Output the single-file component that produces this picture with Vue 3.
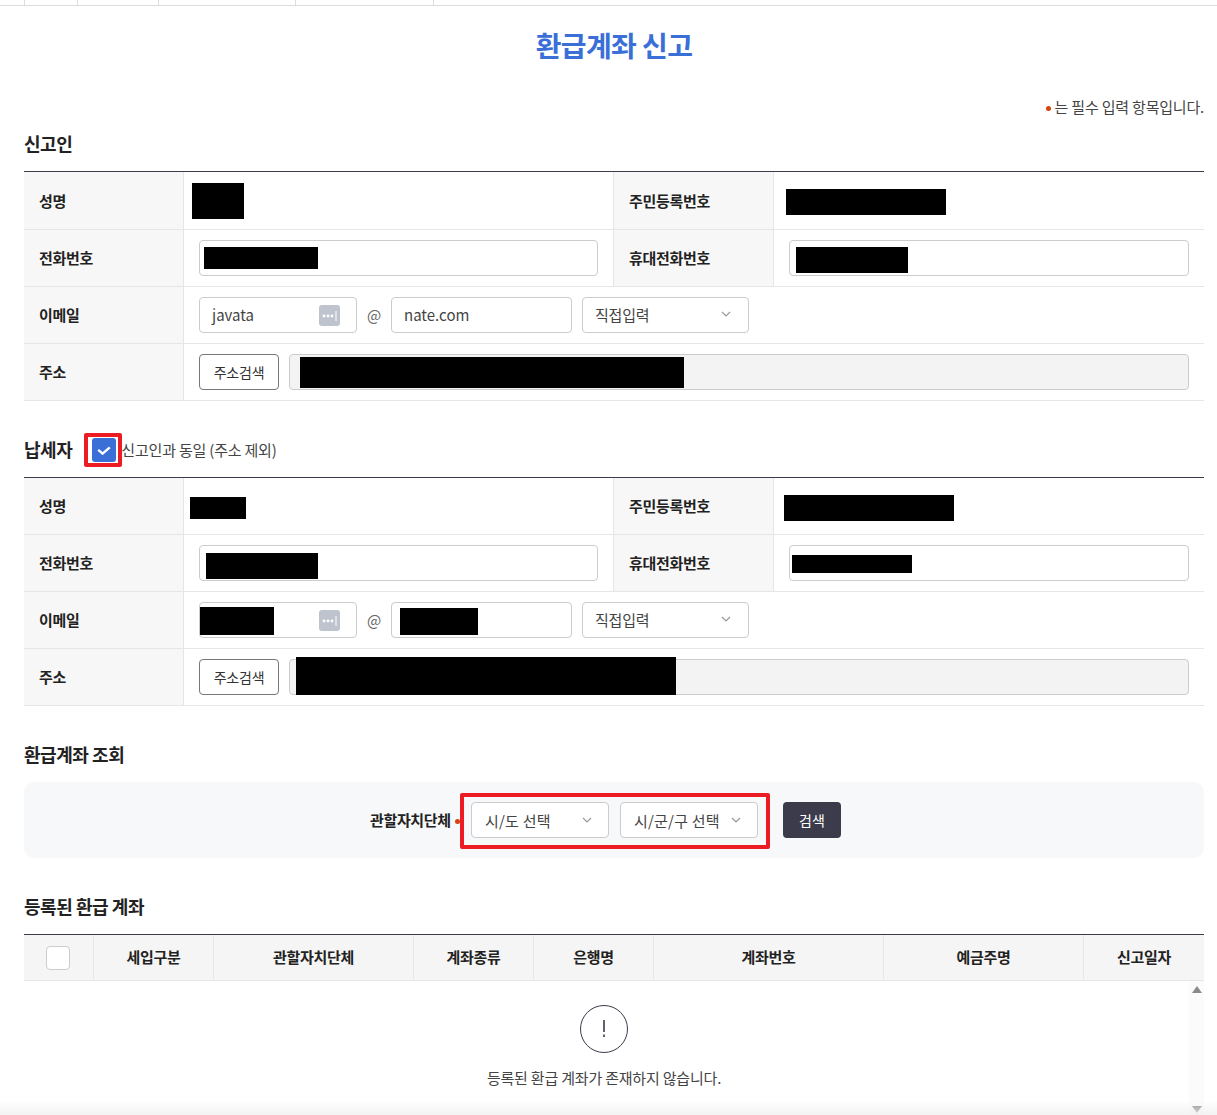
<script setup>
const tabs = [53, 81, 137, 139]

const applicants = [
  {
    title: '신고인',
    tall: true,
    emailId: 'javata',
    emailDomain: 'nate.com',
    cover: {
      name: { left: 8, top: 11, width: 52, height: 36 },
      rrn: { left: 12, top: 17, width: 160, height: 26 },
      tel: { left: 4, top: 6, width: 114, height: 22 },
      mobile: { left: 6, top: 6, width: 112, height: 26 },
      address: { left: 10, top: 2, width: 384, height: 31 }
    }
  },
  {
    title: '납세자',
    tall: false,
    emailId: '',
    emailDomain: '',
    cover: {
      name: { left: 6, top: 19, width: 56, height: 22 },
      rrn: { left: 10, top: 17, width: 170, height: 26 },
      tel: { left: 6, top: 7, width: 112, height: 26 },
      mobile: { left: 2, top: 9, width: 120, height: 18 },
      emailId: { left: 0, top: 4, width: 74, height: 28 },
      emailDomain: { left: 8, top: 5, width: 78, height: 27 },
      address: { left: 6, top: -3, width: 380, height: 38 }
    }
  }
]

const columns = ['세입구분', '관할자치단체', '계좌종류', '은행명', '계좌번호', '예금주명', '신고일자']
const coverStyle = (box) => ({
  left: box.left + 'px',
  top: box.top + 'px',
  width: box.width + 'px',
  height: box.height + 'px'
})
</script>

<template>
  <div class="page">
    <nav class="tabs">
      <span v-for="width in tabs" :key="width" class="tab" :style="{ width: width + 'px' }"></span>
    </nav>

    <main class="content">
      <h1 class="title">환급계좌 신고</h1>
      <p class="note"><i class="dot"></i>는 필수 입력 항목입니다.</p>

      <section v-for="(person, index) in applicants" :key="person.title" class="section">
        <div class="section-head">
          <h2 class="section-title">{{ person.title }}</h2>
          <label v-if="index === 1" class="same">
            <span class="check-mark">
              <svg width="14" height="10" viewBox="0 0 14 10"><path d="M1.2 4.8 5.6 8.6 12.8 2.4" fill="none" stroke="#fff" stroke-width="2.4"/></svg>
            </span>
            <span class="same-text">신고인과 동일 (주소 제외)</span>
          </label>
        </div>

        <table class="form-table">
          <colgroup><col class="c-th"><col class="c-td"><col class="c-th"><col class="c-td"></colgroup>
          <tbody>
            <tr :class="{ tall: person.tall }">
              <th>성명</th>
              <td class="plain"><b class="cover" :style="coverStyle(person.cover.name)"></b></td>
              <th>주민등록번호</th>
              <td class="plain last"><b class="cover" :style="coverStyle(person.cover.rrn)"></b></td>
            </tr>
            <tr>
              <th>전화번호</th>
              <td><div class="input"><b class="cover" :style="coverStyle(person.cover.tel)"></b></div></td>
              <th>휴대전화번호</th>
              <td class="last"><div class="input"><b class="cover" :style="coverStyle(person.cover.mobile)"></b></div></td>
            </tr>
            <tr>
              <th>이메일</th>
              <td colspan="3" class="last">
                <div class="email">
                  <div class="input id">
                    <span>{{ person.emailId }}</span>
                    <b v-if="person.cover.emailId" class="cover" :style="coverStyle(person.cover.emailId)"></b>
                    <svg class="key" width="21" height="21" viewBox="0 0 21 21">
                      <rect width="21" height="21" rx="3" fill="#bfc3ce"/>
                      <circle cx="5" cy="11" r="1.4" fill="#fff"/>
                      <circle cx="9" cy="11" r="1.4" fill="#fff"/>
                      <circle cx="13" cy="11" r="1.4" fill="#fff"/>
                      <path d="M17 6v10" stroke="#fff" stroke-width="1"/>
                    </svg>
                  </div>
                  <span class="at">@</span>
                  <div class="input domain">
                    <span>{{ person.emailDomain }}</span>
                    <b v-if="person.cover.emailDomain" class="cover" :style="coverStyle(person.cover.emailDomain)"></b>
                  </div>
                  <div class="select direct">
                    <span>직접입력</span>
                    <svg width="10" height="6" viewBox="0 0 10 6"><path d="M1 1l4 4 4-4" fill="none" stroke="#999" stroke-width="1.2"/></svg>
                  </div>
                </div>
              </td>
            </tr>
            <tr>
              <th>주소</th>
              <td colspan="3" class="last">
                <div class="address">
                  <button class="addr-btn" type="button">주소검색</button>
                  <div class="input readonly"><b class="cover" :style="coverStyle(person.cover.address)"></b></div>
                </div>
              </td>
            </tr>
          </tbody>
        </table>
      </section>

      <section class="section">
        <div class="section-head"><h2 class="section-title">환급계좌 조회</h2></div>
        <div class="search">
          <span class="search-label">관할자치단체<i class="dot"></i></span>
          <div class="search-selects">
            <div class="select region">
              <span>시/도 선택</span>
              <svg width="10" height="6" viewBox="0 0 10 6"><path d="M1 1l4 4 4-4" fill="none" stroke="#999" stroke-width="1.2"/></svg>
            </div>
            <div class="select region">
              <span>시/군/구 선택</span>
              <svg width="10" height="6" viewBox="0 0 10 6"><path d="M1 1l4 4 4-4" fill="none" stroke="#999" stroke-width="1.2"/></svg>
            </div>
          </div>
          <button class="search-btn" type="button">검색</button>
        </div>
      </section>

      <section class="section">
        <div class="section-head"><h2 class="section-title">등록된 환급 계좌</h2></div>
        <div class="list-head">
          <div class="list-cell first"><span class="check-empty"></span></div>
          <div v-for="column in columns" :key="column" class="list-cell">{{ column }}</div>
        </div>
        <div class="list-body">
          <div class="empty">
            <svg class="empty-icon" width="48" height="48" viewBox="0 0 48 48">
              <circle cx="24" cy="24" r="23.5" fill="none" stroke="#3c3b4b"/>
              <path d="M24 15v12M24 29.5v2.5" fill="none" stroke="#3c3b4b" stroke-width="1.6"/>
            </svg>
            <p class="empty-text">등록된 환급 계좌가 존재하지 않습니다.</p>
          </div>
          <div class="scrollbar">
            <svg width="10" height="7" viewBox="0 0 10 7"><path d="M5 0l5 7H0z" fill="#8a8a8a"/></svg>
            <svg width="10" height="7" viewBox="0 0 10 7"><path d="M5 7l5-7H0z" fill="#8a8a8a"/></svg>
          </div>
        </div>
      </section>
    </main>
    <div class="fade"></div>
  </div>
</template>

<style scoped>
.page {
  position: relative;
  height: 1115px;
  overflow: hidden;
  background: #fff;
  color: #333;
  font-family: "Noto Sans CJK KR", "Noto Sans", sans-serif;
  font-size: 14px;
}
.tabs {
  display: flex;
  height: 5px;
  padding-left: 24px;
  border-bottom: 1px solid #ddd;
}
.tab {
  box-sizing: border-box;
  height: 5px;
  border-left: 1px solid #ddd;
}
.tab:last-child { border-right: 1px solid #ddd; }
.content { padding: 0 13px 0 24px; }
.title {
  margin: 19px 0 0;
  height: 40px;
  line-height: 40px;
  text-align: center;
  font-size: 28px;
  font-weight: 700;
  letter-spacing: -0.6px;
  color: #3a6fd8;
}
.note {
  margin: 32px 0 0;
  height: 20px;
  line-height: 20px;
  text-align: right;
  color: #444;
  font-size: 15px;
  letter-spacing: -0.2px;
}
.dot {
  display: inline-block;
  width: 5px;
  height: 5px;
  margin: 0 4px 1px 0;
  border-radius: 50%;
  background: #d9420b;
  vertical-align: middle;
}
.section { margin-top: 37px; }
.note + .section { margin-top: 15px; }
.section-head {
  display: flex;
  align-items: center;
  height: 24px;
  margin-bottom: 15px;
}
.section-title {
  margin: 0 0 2px;
  font-size: 18px;
  line-height: 24px;
  font-weight: 700;
  letter-spacing: -0.45px;
  color: #222;
}
.same {
  display: flex;
  align-items: center;
  margin-left: 20px;
  color: #444;
  font-size: 15px;
  letter-spacing: -0.2px;
}
.same-text { padding-bottom: 2px; }
.check-mark {
  position: relative;
  display: flex;
  align-items: center;
  justify-content: center;
  width: 24px;
  height: 24px;
  margin-right: 5px;
  border-radius: 3px;
  background: #3a6fd8;
}
.check-mark::after {
  content: "";
  position: absolute;
  left: -8px;
  right: -6px;
  top: -5px;
  bottom: -5px;
  border: 4px solid #ed1c24;
  border-radius: 2px;
}
.form-table {
  width: 100%;
  table-layout: fixed;
  border-collapse: separate;
  border-spacing: 0;
  border-top: 1px solid #3c3b4b;
}
.c-th { width: 160px; }
.c-td { width: 430px; }
.form-table tr { height: 57px; }
.form-table tr.tall { height: 58px; }
.form-table th,
.form-table td {
  box-sizing: border-box;
  border-bottom: 1px solid #e6e6e6;
  border-right: 1px solid #e6e6e6;
  padding: 0 15px;
}
.form-table th {
  padding-bottom: 2px;
  text-align: left;
  background: #f7f7f7;
  font-weight: 700;
  font-size: 15px;
  letter-spacing: -0.3px;
  color: #222;
}
.form-table tr.tall th { padding-bottom: 0; }
.form-table td.last { border-right: 0; }
.form-table td.plain { position: relative; padding: 0; }
.cover {
  position: absolute;
  background: #000;
}
.input {
  position: relative;
  box-sizing: border-box;
  display: flex;
  align-items: center;
  height: 36px;
  padding: 0 12px 2px;
  border: 1px solid #ccc;
  border-radius: 4px;
  background: #fff;
  font-size: 15px;
  color: #444;
}
.email, .address {
  display: flex;
  align-items: center;
}
.id { width: 158px; }
.key { position: absolute; left: 119px; top: 7px; }
.at {
  width: 34px;
  padding-bottom: 2px;
  text-align: center;
  color: #666;
  font-size: 15px;
}
.domain { width: 181px; margin-right: 10px; }
.select {
  box-sizing: border-box;
  display: flex;
  align-items: center;
  justify-content: space-between;
  height: 36px;
  border: 1px solid #ccc;
  border-radius: 4px;
  background: #fff;
  color: #444;
  font-size: 15px;
  letter-spacing: -0.2px;
}
.direct { width: 167px; padding: 0 17px 2px 12px; }
.addr-btn {
  box-sizing: border-box;
  width: 80px;
  height: 36px;
  margin-right: 10px;
  padding: 0;
  border: 1px solid #777;
  border-radius: 4px;
  background: #fff;
  color: #333;
  font: inherit;
  font-size: 14px;
  letter-spacing: -0.2px;
}
.readonly { width: 900px; background: #f3f3f3; }
.search {
  display: flex;
  align-items: center;
  height: 76px;
  padding-left: 346px;
  border-radius: 10px;
  background: #f7f8fa;
}
.search-label {
  width: 101px;
  padding-bottom: 2px;
  font-weight: 700;
  font-size: 15px;
  letter-spacing: -0.35px;
  color: #222;
  white-space: nowrap;
}
.search-label .dot { margin: 0 0 0 4px; }
.search-selects {
  position: relative;
  display: flex;
  gap: 11px;
}
.search-selects::after {
  content: "";
  position: absolute;
  left: -11px;
  right: -12px;
  top: -9px;
  bottom: -11px;
  border: 4px solid #ed1c24;
  border-radius: 2px;
}
.region { width: 138px; padding: 0 16px 0 13px; letter-spacing: 0.2px; }
.search-btn {
  width: 58px;
  height: 36px;
  margin-left: 25px;
  padding: 0;
  border: 0;
  border-radius: 4px;
  background: #3c3b4b;
  color: #fff;
  font: inherit;
  font-size: 14px;
}
.list-head {
  display: grid;
  grid-template-columns: 70px 120px 200px 120px 120px 230px 200px 120px;
  height: 47px;
  box-sizing: border-box;
  border-top: 1px solid #3c3b4b;
  border-bottom: 1px solid #e6e6e6;
  background: #f5f5f5;
}
.list-cell {
  display: flex;
  align-items: center;
  justify-content: center;
  padding-bottom: 2px;
  border-right: 1px solid #e6e6e6;
  font-weight: 700;
  font-size: 15px;
  letter-spacing: -0.3px;
  color: #222;
}
.list-cell.first { padding: 0 1px 0 0; }
.list-cell:last-child { border-right: 0; }
.check-empty {
  box-sizing: border-box;
  width: 24px;
  height: 24px;
  border: 1px solid #ccc;
  border-radius: 4px;
  background: #fff;
}
.list-body {
  display: flex;
  justify-content: space-between;
  height: 135px;
}
.empty {
  flex: 1;
  padding: 24px 5px 0 0;
  text-align: center;
}
.empty-icon { display: block; margin: 0 auto; }
.empty-text {
  margin: 16px 0 0;
  line-height: 18px;
  color: #444;
  font-size: 15px;
  letter-spacing: -0.2px;
}
.scrollbar {
  display: flex;
  flex-direction: column;
  justify-content: space-between;
  align-items: center;
  box-sizing: border-box;
  width: 15px;
  padding: 5px 0 3px;
  background: #fbfbfb;
}
.fade {
  position: absolute;
  left: 0;
  right: 0;
  bottom: 0;
  height: 15px;
  background: linear-gradient(rgba(240, 240, 240, 0), rgba(240, 240, 240, 0.8));
  pointer-events: none;
}
</style>
